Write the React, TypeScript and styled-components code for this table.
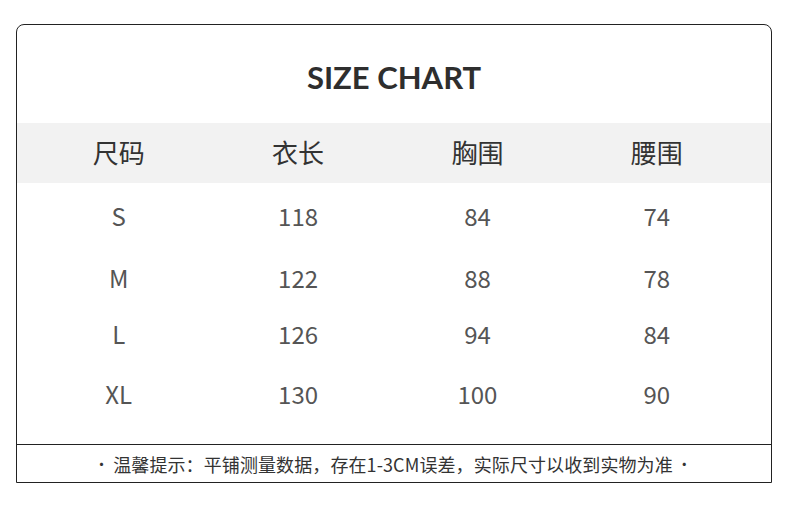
import React from "react";
import styled, { createGlobalStyle } from "styled-components";

const Global = createGlobalStyle`
  html, body { margin: 0; padding: 0; background: #ffffff; }
  body { font-family: "Noto Sans CJK SC", "Noto Sans", sans-serif; }
`;

const Page = styled.div`
  width: 790px;
  height: 508px;
  padding: 24px 18px 0 16px;
  box-sizing: border-box;
`;

const Card = styled.div`
  width: 756px;
  border: 1px solid #222;
  border-radius: 8px 8px 0 0;
  box-sizing: border-box;
  display: flex;
  flex-direction: column;
  background: #fff;
`;

const TitleBar = styled.div`
  height: 98px;
  display: flex;
  align-items: center;
  justify-content: center;
`;

const Title = styled.h1`
  margin: 0;
  padding-top: 6px;
  font-family: Lato, "Liberation Sans", sans-serif;
  font-weight: 700;
  font-size: 31px;
  color: #2e2e2e;
  letter-spacing: 0px;
`;

const Row = styled.div<{ $h: number; $head?: boolean }>`
  height: ${(p) => p.$h}px;
  display: grid;
  grid-template-columns: repeat(4, 179.4px);
  padding-left: 12px;
  align-items: center;
  background: ${(p) => (p.$head ? "#f2f2f2" : "transparent")};
`;

const Cell = styled.div<{ $head?: boolean }>`
  text-align: center;
  font-family: "Noto Sans CJK SC", "Noto Sans", sans-serif;
  font-size: ${(p) => (p.$head ? 26 : 24)}px;
  font-weight: 400;
  color: ${(p) => (p.$head ? "#333" : "#555")};
  line-height: 1;
  transform: translateY(-1px);
`;

const Body = styled.div`
  padding-bottom: 17px;
`;

const Footer = styled.div`
  height: 37px;
  border-top: 1px solid #222;
  display: flex;
  align-items: center;
  justify-content: center;
  gap: 4px;
  font-size: 18px;
  letter-spacing: 0.1px;
  color: #333;
  padding-right: 2px;
`;

const Dot = styled.span`
  font-size: 15px;
  color: #333;
`;

const rows = [
  { h: 68, v: ["S", "118", "84", "74"] },
  { h: 56, v: ["M", "122", "88", "78"] },
  { h: 56, v: ["L", "126", "94", "84"] },
  { h: 64, v: ["XL", "130", "100", "90"] },
];

export default function App() {
  return (
    <>
      <Global />
      <Page>
        <Card>
          <TitleBar>
            <Title>SIZE CHART</Title>
          </TitleBar>
          <Row $h={60} $head>
            {["尺码", "衣长", "胸围", "腰围"].map((t) => (
              <Cell key={t} $head>
                {t}
              </Cell>
            ))}
          </Row>
          <Body>
            {rows.map((r) => (
              <Row key={r.v[0]} $h={r.h}>
                {r.v.map((t, i) => (
                  <Cell key={i}>{t}</Cell>
                ))}
              </Row>
            ))}
          </Body>
          <Footer>
            <Dot>•</Dot>
            <span>温馨提示：平铺测量数据，存在1-3CM误差，实际尺寸以收到实物为准</span>
            <Dot>•</Dot>
          </Footer>
        </Card>
      </Page>
    </>
  );
}
